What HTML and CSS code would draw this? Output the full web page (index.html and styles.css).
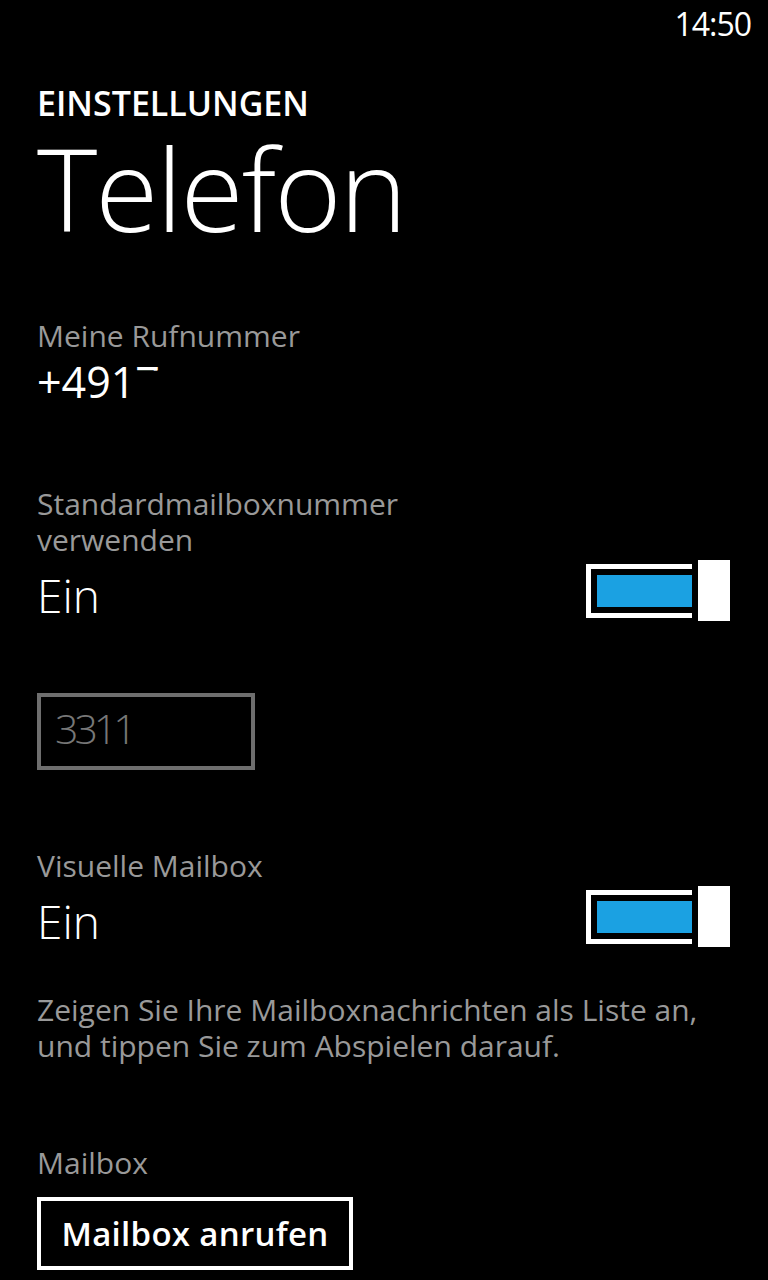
FILE: index.html
```html
<!DOCTYPE html>
<html lang="de">
<head>
  <meta charset="utf-8">
  <title>Telefon</title>
  <link rel="stylesheet" href="styles.css">
</head>
<body>
  <div class="status"><span class="clock">14:50</span></div>

  <div class="page">
    <div class="app-title">EINSTELLUNGEN</div>
    <div class="page-title">Telefon</div>

    <div class="group own-number">
      <div class="label">Meine Rufnummer</div>
      <div class="phone">+491<span class="cut">7</span></div>
    </div>

    <div class="group default-box">
      <div class="label">Standardmailboxnummer<br>verwenden</div>
      <div class="switch-row">
        <div class="value">Ein</div>
        <div class="toggle"><div class="track"><div class="fill"></div></div><div class="thumb"></div></div>
      </div>
    </div>

    <div class="textbox">3311</div>

    <div class="group visual">
      <div class="label">Visuelle Mailbox</div>
      <div class="switch-row">
        <div class="value">Ein</div>
        <div class="toggle"><div class="track"><div class="fill"></div></div><div class="thumb"></div></div>
      </div>
      <p class="hint">Zeigen Sie Ihre Mailboxnachrichten als Liste an,<br>und tippen Sie zum Abspielen darauf.</p>
    </div>

    <div class="group mailbox">
      <div class="label">Mailbox</div>
      <div class="button">Mailbox anrufen</div>
    </div>
  </div>
</body>
</html>
```

FILE: styles.css
```css
html, body {
    margin: 0;
    background: #000;
}
body {
    width: 768px;
    height: 1280px;
    overflow: hidden;
    color: #fff;
    font-family: "Open Sans", "Noto Sans", sans-serif;
}

/* status bar */
.status {
    display: flex;
    justify-content: flex-end;
    height: 48px;
    padding-right: 17px;
}
.clock {
    font-size: 32px;
    line-height: 48px;
    letter-spacing: -1px;
}

.page {
    padding-left: 37px;
}
.app-title {
    margin-top: 35px;
    font-size: 34px;
    font-weight: 600;
    line-height: 40px;
}
.page-title {
    font-size: 115px;
    font-weight: 300;
    line-height: 130px;
    letter-spacing: -2px;
}

.label {
    color: #999;
    font-size: 30px;
    line-height: 36px;
}
.group.own-number {
    margin-top: 65px;
}
.phone {
    font-size: 43px;
    line-height: 56px;
}
.phone .cut {
    display: inline-block;
    clip-path: inset(0 0 70% 0);
}

.group.default-box {
    margin-top: 76px;
}
.switch-row {
    display: flex;
    align-items: flex-start;
    justify-content: space-between;
    padding-right: 38px;
}
.value {
    margin-top: 1px;
    font-size: 46px;
    font-weight: 300;
    line-height: 72px;
}
.toggle {
    display: flex;
    align-items: center;
    gap: 6px;
    margin-top: 2px;
}
.track {
    width: 95px;
    padding: 6px 0 6px 6px;
    border: 5px solid #fff;
    border-right: none;
}
.fill {
    height: 32px;
    background: #1ba1e2;
}
.thumb {
    width: 32px;
    height: 61px;
    background: #fff;
}

.textbox {
    box-sizing: border-box;
    width: 218px;
    height: 77px;
    margin-top: 62px;
    padding-left: 14px;
    border: 4px solid #6e6e6e;
    color: #777;
    font-size: 41px;
    font-weight: 300;
    line-height: 63px;
    letter-spacing: -4px;
}

.group.visual {
    margin-top: 78px;
}
.hint {
    margin: 35px 0 0;
    color: #999;
    font-size: 30px;
    line-height: 36px;
}

.group.mailbox {
    margin-top: 81px;
}
.button {
    box-sizing: border-box;
    width: 316px;
    height: 73px;
    margin-top: 16px;
    border: 4px solid #fff;
    font-size: 33px;
    font-weight: 600;
    line-height: 65px;
    letter-spacing: 0.3px;
    text-align: center;
}
```
